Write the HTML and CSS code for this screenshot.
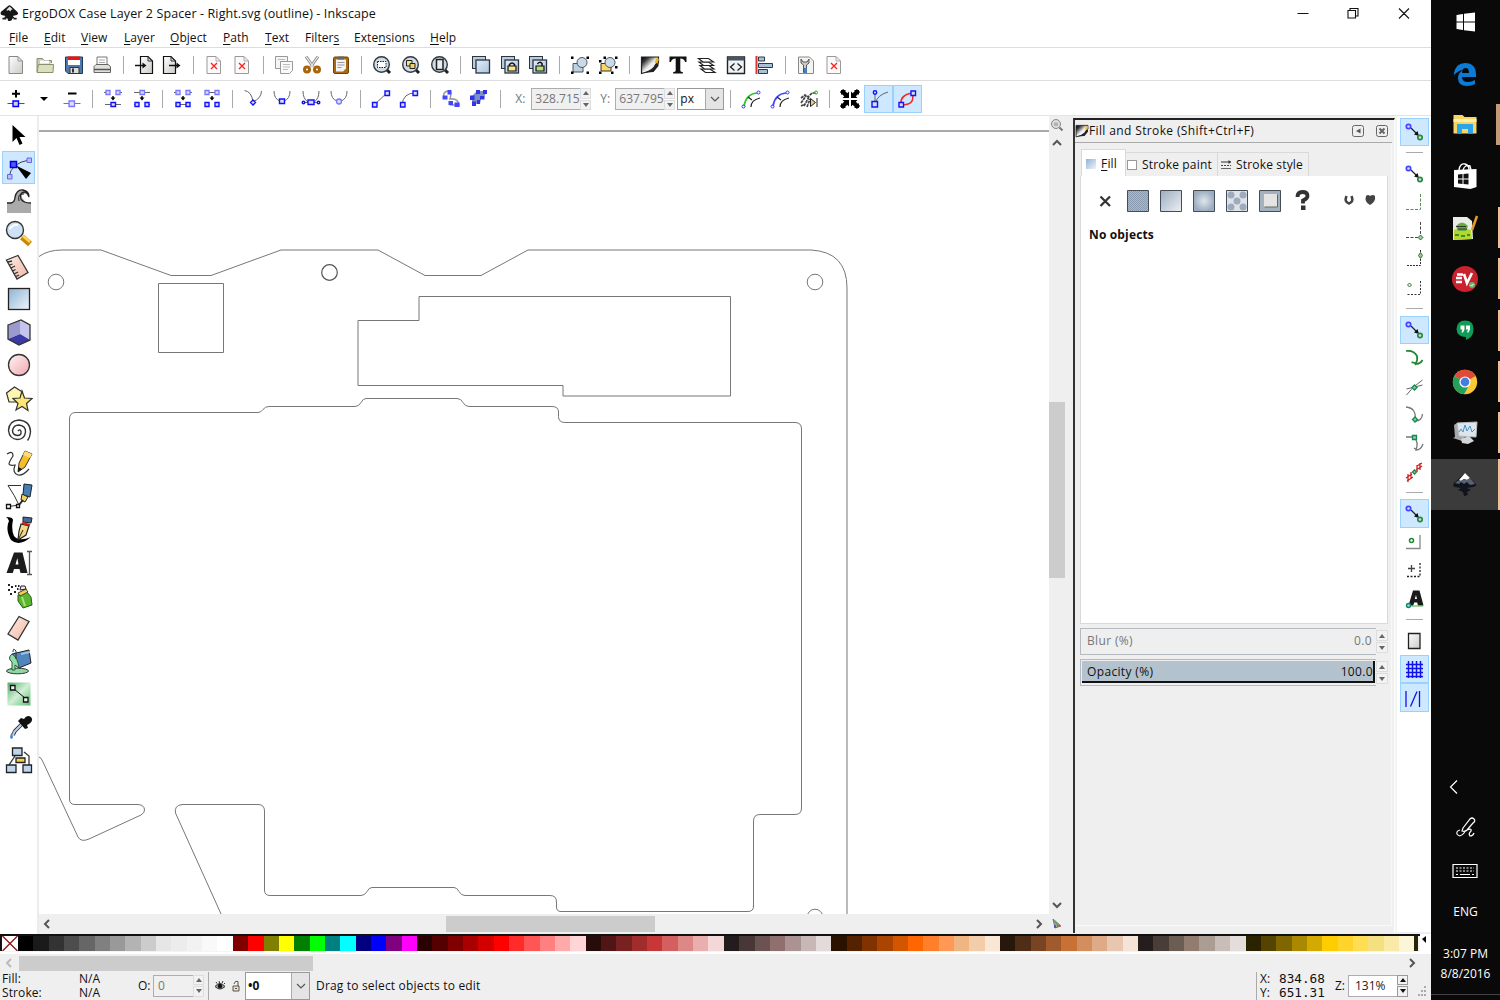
FILE: index.html
```html
<!DOCTYPE html>
<html lang="en">
<head>
<meta charset="utf-8">
<title>ErgoDOX Case Layer 2 Spacer - Right.svg (outline) - Inkscape</title>
<link rel="stylesheet" href="styles.css">
</head>
<body>
<svg class="defs" width="0" height="0">
  <defs>
    <linearGradient id="blueG" x1="0" y1="0" x2="1" y2="1"><stop offset="0" stop-color="#8fb2d4"/><stop offset="1" stop-color="#eef5fb"/></linearGradient>
    <linearGradient id="dupG" x1="0" y1="0" x2="1" y2="1"><stop offset="0" stop-color="#e4edf6"/><stop offset="1" stop-color="#a9c4de"/></linearGradient>
    <linearGradient id="slateG" x1="0" y1="0" x2="1" y2="1"><stop offset="0" stop-color="#9badc0"/><stop offset="1" stop-color="#eef0f3"/></linearGradient>
    <radialGradient id="slateR"><stop offset="0" stop-color="#dfe6ec"/><stop offset="1" stop-color="#9badc0"/></radialGradient>
    <linearGradient id="pinkG" x1="0" y1="0" x2="1" y2="1"><stop offset="0" stop-color="#fff3f3"/><stop offset="1" stop-color="#f0a8b0"/></linearGradient>
    <linearGradient id="salmonG" x1="0" y1="0" x2="1" y2="1"><stop offset="0" stop-color="#fdeee8"/><stop offset="1" stop-color="#f3b6a2"/></linearGradient>
    <linearGradient id="greyG" x1="0" y1="0" x2="1" y2="1"><stop offset="0" stop-color="#fff"/><stop offset="1" stop-color="#c9ccc6"/></linearGradient>
    <linearGradient id="darkG" x1="0" y1="0" x2="1" y2="1"><stop offset="0" stop-color="#000"/><stop offset=".2" stop-color="#333"/><stop offset=".5" stop-color="#eee"/><stop offset="1" stop-color="#fff"/></linearGradient>
    <linearGradient id="greenG" x1="0" y1="0" x2="1" y2="1"><stop offset="0" stop-color="#4fae66"/><stop offset=".5" stop-color="#d2efd6"/><stop offset="1" stop-color="#58c070"/></linearGradient>
    <pattern id="hatch" width="2" height="2" patternUnits="userSpaceOnUse"><rect width="2" height="2" fill="#a9b8ca"/><path d="M0 0h1v1H0zM1 1h1v1H1z" fill="#8b9bb0"/></pattern>
    <symbol id="page" viewBox="0 0 24 24"><path d="M5 3.500h9l4.500 4.500v12.500H5z" fill="url(#greyG)" stroke="#888"/><path d="M14 3.500V8h4.500" fill="none" stroke="#999"/></symbol>
    <symbol id="badpage" viewBox="0 0 24 24"><path d="M5 3.500h9l4.500 4.500v12.500H5z" fill="#fafafa" stroke="#999"/><path d="M14 3.500V8h4.500" fill="none" stroke="#aaa"/><path d="M9 10l6 6M15 10l-6 6" stroke="#f22" stroke-width="1.400"/></symbol>
    <symbol id="lens" viewBox="0 0 24 24"><path d="M17 17l3 3" stroke="#222" stroke-width="3"/><circle cx="11.500" cy="11.500" r="7.800" fill="#cfdde8" stroke="#33383c" stroke-width="1.400"/></symbol>
    <symbol id="dup" viewBox="0 0 24 24"><rect x="3.500" y="3.500" width="13" height="12" fill="#b8cede" stroke="#2b3440"/><rect x="7" y="7" width="13.500" height="13" fill="url(#dupG)" stroke="#2b3440" stroke-width="1.300"/></symbol>
    <symbol id="snap" viewBox="0 0 24 24"><path d="M8 8l6 6" stroke="#222" stroke-width="1.300"/><path d="M16 16l-5-1.500 3.500-3.500z" fill="#111"/><circle cx="5.500" cy="6.500" r="2.200" fill="#cde" stroke="#44f" stroke-width="1.700"/><circle cx="17" cy="17.500" r="2.200" fill="#cde" stroke="#2a8a3a" stroke-width="1.700"/></symbol>
    <symbol id="fillstroke" viewBox="0 0 24 24"><path d="M3.500 4H20.500v5l-4.500 8-12.500 3.500z" fill="url(#darkG)" stroke="#222" stroke-width="1.200"/><path d="M20.500 8q-3 2-5 6-4 4-11 6l11-1 5-6z" fill="#222"/><path d="M18.500 5l2.500 1-1.500 4.500-3-1z" fill="#f0b41a"/></symbol>
    <symbol id="ink" viewBox="0 0 24 24"><path d="M12 1.500q1.500 0 3 2l7 6.500q2 2.500-1 4l-5 1q2 1 2 2.500l-3 1.500q1 2-3 2.500-3 0-2-3l-5-1.500 2-2-5-1q-2-1-1-4l8-6.500Q10.500 1.500 12 1.500z" fill="#161616"/><path d="M12 3l4 3.500-2 1-1 2-2-2-2 1-1-1z" fill="#dfe3e8"/><path d="M3 18.500h5M17 18.500h4" stroke="#222" stroke-width="2"/></symbol>
  </defs>
</svg>

<div class="desktop">
<div class="app">
  <header class="titlebar">
    <svg class="logo" viewBox="0 0 24 24"><use href="#ink"/></svg>
    <span class="title">ErgoDOX Case Layer 2 Spacer - Right.svg (outline) - Inkscape</span>
    <svg class="winctl" viewBox="0 0 120 24" fill="none" stroke="#111" stroke-width="1.100"><path d="M3.500 12.500h11M54 9.500h7.500v7.500H54zM56 9.500v-2h8v7.500h-2M105 7.500l10 10M115 7.500l-10 10"/></svg>
  </header>
  <nav class="menubar">
    <span class="m1"><u>F</u>ile</span><span class="m2"><u>E</u>dit</span><span class="m3"><u>V</u>iew</span><span class="m4"><u>L</u>ayer</span><span class="m5"><u>O</u>bject</span><span class="m6"><u>P</u>ath</span><span class="m7"><u>T</u>ext</span><span class="m8">Filter<u>s</u></span><span class="m9">Exte<u>n</u>sions</span><span class="m10"><u>H</u>elp</span>
  </nav>

  <div class="toolbar commands">
    <b><svg viewBox="0 0 24 24"><use href="#page"/></svg></b>
    <b><svg viewBox="0 0 24 24"><path d="M4 19V5.500h5.500l1.500 2h7.500V10" fill="#c9cdb0" stroke="#8b8f70"/><path d="M4 19.500l1.500-8h15l-.500 8z" fill="#dadfbd" stroke="#8b8f70"/><path d="M7 7.500h9v3H7z" fill="#fff"/></svg></b>
    <b><svg viewBox="0 0 24 24"><path d="M3.500 4h17v16.500H6L3.500 18z" fill="#4f79ad" stroke="#1f3657"/><path d="M6 4h12v8H6z" fill="#fff"/><path d="M6 3.500h12v3.500H6z" fill="#e11"/><path d="M8 14.500h9v6H8z" fill="#ddd" stroke="#333"/><path d="M10 15.500h2v4h-2z" fill="#333"/></svg></b>
    <b><svg viewBox="0 0 24 24"><path d="M7 12V4h10v8" fill="#fff" stroke="#777"/><path d="M9 7h6M9 9.500h6" stroke="#aaa"/><path d="M4 19.500v-6l2-2h12l2.500 2v6z" fill="#e0e0dc" stroke="#666"/><path d="M4 16.500h16.500" stroke="#555" stroke-width="1.500"/></svg></b>
    <i></i>
    <b><svg viewBox="0 0 24 24"><path d="M8.500 3.500H16l4.500 4.500v12.500h-12z" fill="url(#greyG)" stroke="#111" stroke-width="1.200"/><path d="M16 3.500V8h4.500" fill="none" stroke="#333"/><path d="M3 12.500h8" stroke="#111" stroke-width="1.500"/><path d="M10.500 9.500l4 3-4 3z" fill="#111"/></svg></b>
    <b><svg viewBox="0 0 24 24"><path d="M3.500 3.500H11l4.500 4.500v12.500h-12z" fill="url(#greyG)" stroke="#111" stroke-width="1.200"/><path d="M11 3.500V8h4.500" fill="none" stroke="#333"/><path d="M9 12.500h8" stroke="#111" stroke-width="1.500"/><path d="M16.500 9.500l4 3-4 3z" fill="#111"/></svg></b>
    <i></i>
    <b><svg viewBox="0 0 24 24"><use href="#badpage"/></svg></b>
    <b><svg viewBox="0 0 24 24"><use href="#badpage"/></svg></b>
    <i></i>
    <b><svg viewBox="0 0 24 24" stroke="#999"><path d="M3.500 3.500h12v12h-12z" fill="#f4f4f4"/><path d="M8.500 8.500h12v9l-3 3h-9z" fill="#fafafa"/><path d="M6 6.500h7M11 11.500h7M11 14h7M11 16.500h5" stroke="#bbb"/></svg></b>
    <b><svg viewBox="0 0 24 24"><path d="M6 3.500l7 10M18 3.500l-7 10" stroke="#8a8a8a" stroke-width="3"/><path d="M6 3.500l7 10M18 3.500l-7 10" stroke="#eee" stroke-width="1.200"/><g fill="none" stroke="#a9640a" stroke-width="3"><circle cx="7" cy="16.500" r="2.500"/><circle cx="17" cy="16.500" r="2.500"/></g></svg></b>
    <b><svg viewBox="0 0 24 24"><rect x="4.500" y="4" width="15" height="16.500" rx="1.500" fill="#a9690f" stroke="#6d430a"/><path d="M7 6.500h10v9l-3 3H7z" fill="#f3f3f3"/><path d="M8.500 9.500h7M8.500 12h7M8.500 14.500h4" stroke="#999"/><path d="M9 3.500h6v3H9z" fill="#666"/></svg></b>
    <i></i>
    <b><svg viewBox="0 0 24 24"><use href="#lens"/><path d="M7.500 8.500h8.500v6H7.500z" fill="#fff" stroke="#222" stroke-dasharray="1.500 1"/></svg></b>
    <b><svg viewBox="0 0 24 24"><use href="#lens"/><path d="M7.500 7.500h5.500v5.500H7.500z" fill="#f8e28a" stroke="#222"/><path d="M11 10.500h5v5h-5z" fill="#f4cf62" stroke="#222"/></svg></b>
    <b><svg viewBox="0 0 24 24"><use href="#lens"/><path d="M8.500 6.500h6.500V16.500H8.500z" fill="#eee" stroke="#222" stroke-width="1.500"/></svg></b>
    <i></i>
    <b><svg viewBox="0 0 24 24"><use href="#dup"/></svg></b>
    <b><svg viewBox="0 0 24 24"><use href="#dup"/><path d="M11.500 13v-1.500q2.500-3 5 0V13" fill="none" stroke="#111" stroke-width="1.500"/><path d="M10 13h8v5h-8z" fill="#fbe38a" stroke="#111" stroke-width="1.200"/></svg></b>
    <b><svg viewBox="0 0 24 24"><use href="#dup"/><path d="M11.500 11q2-3 4.500-.500V13" fill="none" stroke="#111" stroke-width="1.500"/><path d="M10 13h8v5h-8z" fill="#b6e07a" stroke="#111" stroke-width="1.200"/></svg></b>
    <i></i>
    <b><svg viewBox="0 0 24 24"><path d="M5 10.500h10V19H5z" fill="#bcd0e4" stroke="#555"/><circle cx="14" cy="9.500" r="5" fill="#c9daea" stroke="#555"/><path d="M3 3.500h2.500V6H3zM18.500 3.500H21V6h-2.500zM3 18.500h2.500V21H3zM18.500 18.500H21V21h-2.500z"/></svg></b>
    <b><svg viewBox="0 0 24 24"><path d="M5 10.500h10V18H5z" fill="#fbd765" stroke="#333"/><circle cx="14" cy="9.500" r="5" fill="#c9daea" stroke="#555"/><path d="M3 7h2.500v2.500H3zM7.500 3.500H10V6H7.500zM19 3.500h2.500V6H19zM3 18.500h2.500V21H3zM15 18.500h2.500V21H15zM19 13h2.500v2.500H19z"/></svg></b>
    <i></i>
    <b><svg viewBox="0 0 24 24"><use href="#fillstroke"/></svg></b>
    <b><svg viewBox="0 0 24 24"><path d="M3.500 3.500h17v5.500h-1.500q-.500-3.500-4.700-3.500v12q0 1.500 2.500 1.500v1.500H7.200V19q2.500 0 2.500-1.500v-12Q5.500 5.500 5 9H3.500z" fill="#111"/></svg></b>
    <b><svg viewBox="0 0 24 24" fill="#fff" stroke="#222" stroke-width="1.200"><path d="M6 16h9l5 3.500H10.500z"/><path d="M5 12.500h9l5 3.500H9.500z"/><path d="M4 9h9.500l5 3.500H8.500z"/><path d="M3.500 5.500h10l5 3.500H8z"/></svg></b>
    <b><svg viewBox="0 0 24 24"><path d="M3.500 4h17v16.500h-17z" fill="#eef2f4" stroke="#222" stroke-width="1.400"/><path d="M3.500 4h17v3.500h-17z" fill="#435567"/><path d="M10.500 10.500l-4 3.500 4 3.500M13.500 10.500l4 3.500-4 3.500" fill="none" stroke="#222" stroke-width="1.300"/></svg></b>
    <b><svg viewBox="0 0 24 24" fill="#a9c1d6" stroke="#2c3a4a"><path d="M4.500 3v18" stroke="#d33" stroke-width="2"/><path d="M6.500 4h6v4h-6zM6.500 10.500h14v4h-14zM6.500 16.500h9v4h-9z"/></svg></b>
    <i></i>
    <b><svg viewBox="0 0 24 24"><path d="M4.500 4h11l4 4v12.500h-15z" fill="#f4f4f0" stroke="#888"/><path d="M7 6v4l2.500 2v7.500h3V12L15 10V6l-2 3h-4z" fill="#ccc" stroke="#555"/><path d="M10 15h3v5h-3z" fill="#4a7db5"/></svg></b>
    <b><svg viewBox="0 0 24 24"><use href="#badpage"/></svg></b>
  </div>

  <div class="toolbar nodes">
    <b><svg viewBox="0 0 24 24"><path d="M12 3v7.500M8 6.700h8" stroke="#000" stroke-width="2"/><path d="M3.500 16.500h17" stroke="#555"/><path d="M9 14h5.500v5.500H9z" fill="#cce" stroke="#00f" stroke-width="1.400"/></svg></b>
    <b class="drop"><svg viewBox="0 0 24 24"><path d="M8 10h8l-4 4z"/></svg></b>
    <b><svg viewBox="0 0 24 24"><path d="M8 6.500h8.500" stroke="#000" stroke-width="2"/><path d="M3.500 16.500h17" stroke="#777"/><path d="M9 14h5.500v5.500H9z" fill="#dde" stroke="#77f" stroke-width="1.300"/></svg></b>
    <i></i>
    <b><svg class="nd" viewBox="0 0 24 24"><path class="k" d="M3 5.500h4M17 5.500h4M4 17.500h16"/><path class="f" d="M5 3.500h4v4H5zM15 3.500h4v4h-4z"/><path class="n" d="M10 15.500h4.500v4H10z"/><path class="a" d="M12 9v2"/><path d="M9.500 10.500h5l-2.500 3z"/></svg></b>
    <b><svg class="nd" viewBox="0 0 24 24"><path class="k" d="M4 5.500h16M4 17.500h2M18 17.500h2"/><path class="f" d="M10 3.500h4.500v4H10z"/><path class="n" d="M5 15.500h4v4H5zM15 15.500h4v4h-4z"/><path class="a" d="M12 9v2"/><path d="M9.500 10.500h5l-2.500 3z"/></svg></b>
    <i></i>
    <b><svg class="nd" viewBox="0 0 24 24"><path class="k" d="M3 5.500h4M17 5.500h4M5 17.500h14"/><path class="f" d="M5 3.500h4v4H5zM15 3.500h4v4h-4z"/><path class="n" d="M5 15.500h4v4H5zM15 15.500h4v4h-4z"/><path class="a" d="M12 9v2"/><path d="M9.500 10.500h5l-2.500 3z"/></svg></b>
    <b><svg class="nd" viewBox="0 0 24 24"><path class="k" d="M5 5.500h14"/><path class="f" d="M5 3.500h4v4H5zM15 3.500h4v4h-4z"/><path class="n" d="M5 15.500h4v4H5zM15 15.500h4v4h-4z"/><path class="a" d="M12 9v2"/><path d="M9.500 10.500h5l-2.500 3z"/></svg></b>
    <i></i>
    <b><svg class="nd" viewBox="0 0 24 24"><path class="k" d="M3.500 3.500q7 1 8.500 11Q20 12 20.500 4"/><path class="n" d="M12 13l2.500 2.500L12 18l-2.500-2.500z"/></svg></b>
    <b><svg class="nd" viewBox="0 0 24 24"><path class="k" d="M4 4q0 8 6 10h4q6-2 6-10"/><path class="n" d="M9.500 12h5v4.500h-5z"/></svg></b>
    <b><svg class="nd" viewBox="0 0 24 24"><path class="k" d="M4 4q0 8 5 11h6q5-3 5-11M4 15.500h16"/><path class="n" d="M9 13h6v4.500H9z"/><circle class="n" cx="4.500" cy="15.500" r="1.300"/><circle class="n" cx="19.500" cy="15.500" r="1.300"/></svg></b>
    <b><svg class="nd" viewBox="0 0 24 24"><path class="k" d="M4 4q0 8 6 10h4q6-2 6-10"/><circle class="f" cx="12" cy="14.500" r="2.500"/></svg></b>
    <i></i>
    <b><svg class="nd" viewBox="0 0 24 24"><path class="k" d="M5 18L19 5"/><path class="n" d="M3.500 15.500H8v4.500H3.500zM16 4h4.500v4.500H16z"/></svg></b>
    <b><svg class="nd" viewBox="0 0 24 24"><path class="k" d="M5 18Q6 6 18 6"/><path class="n" d="M3.500 15.500H8v4.500H3.500zM16 4h4.500v4.500H16z"/></svg></b>
    <i></i>
    <b><svg class="nd" viewBox="0 0 24 24"><path d="M5 12q-2-8 5-8 3 1 1 8 8-1 9 6h-9" fill="none" stroke="#999" stroke-width="1.500"/><path d="M8.500 3h4v4.500h-4zM3.500 8.500h5v4h-5zM9.500 14h4.500v4H9.500zM15.500 15.500h5v4.500h-5z" fill="#44f"/></svg></b>
    <b><svg viewBox="0 0 24 24"><path d="M5 9l5-5h10l-3 6-3 2-1 5H5z" fill="#7c8fc4"/><path d="M9 3h4v4H9zM16 3h4v4h-4zM3 8.500h4.500V13H3zM13 9h4.500v3.500H13zM5 14.500h4V19H5zM10 13h3v4h-3z" fill="#33e"/></svg></b>
    <i></i>
    <label class="lx">X:</label><span class="num">328.715</span><span class="spin"><em></em><em class="dn"></em></span>
    <label class="ly">Y:</label><span class="num">637.795</span><span class="spin"><em></em><em class="dn"></em></span>
    <span class="combo"><span>px</span><s><svg viewBox="0 0 12 12"><path d="M2 4l4 4 4-4"/></svg></s></span>
    <i></i>
    <b><svg viewBox="0 0 24 24" fill="none"><path d="M5 19Q7 7 18 6" stroke="#2c2" stroke-width="1.700"/><path d="M12 20q0-7 9-9M13 13l-4-3" stroke="#222" stroke-width="1.200"/><circle cx="19.500" cy="5.500" r="1.500" stroke="#33f"/><circle cx="4.500" cy="19.500" r="1.500" stroke="#33f"/></svg></b>
    <b><svg viewBox="0 0 24 24" fill="none"><path d="M5 19Q7 7 18 6" stroke="#44f" stroke-width="1.700"/><path d="M12 20q0-7 9-9M13 13l-4-3" stroke="#222" stroke-width="1.200"/><circle cx="19.500" cy="5.500" r="1.500" stroke="#33f"/><circle cx="4.500" cy="19.500" r="1.500" stroke="#33f"/></svg></b>
    <b><svg viewBox="0 0 24 24" fill="none"><path d="M4 16l5-7M7 19l5-9M10 20l3-8M4 11l4-3 3 2 4-4 4 0M4 19l4-2" stroke="#444" stroke-width="1.700" stroke-dasharray="3 .7"/><path d="M13.500 11.500l5 4-5 4z" fill="#edca85" stroke="#222"/><path d="M20 11v9" stroke="#222"/><circle cx="19" cy="5.500" r="1.500" stroke="#2a2"/></svg></b>
    <i></i>
    <b><svg viewBox="0 0 24 24"><path d="M3.500 3.500l5 5M20.500 3.500l-5 5M3.500 20.500l5-5M20.500 20.500l-5-5" stroke="#000" stroke-width="4.500"/><path d="M3 3h5L3 8zM21 3h-5l5 5zM3 21h5l-5-5zM21 21h-5l5-5zM11 4.500V11H4.500zM13 4.500V11h6.500zM11 19.500V13H4.500zM13 19.500V13h6.500z"/></svg></b>
    <b class="on"><svg class="nd" viewBox="0 0 24 24"><path class="k" d="M8 17V6M8 17Q10 8 21 5"/><circle class="n" cx="8" cy="5.500" r="1.700"/><path class="n" d="M5 14.500h5.500V20H5z"/></svg></b>
    <b class="on"><svg class="nd" viewBox="0 0 24 24"><path d="M6 17Q5 8 17 6q4 12-11 12" fill="none" stroke="#f22" stroke-width="1.500"/><path class="n" d="M4 15.500h4.500V20H4zM16 4h4.500v4.500H16z"/></svg></b>
  </div>

  <main class="work">
    <aside class="toolbox">
      <b><svg viewBox="0 0 28 28"><path d="M7.500 4v17l4-4 3 7 3-1.500-3-6.500h6z" fill="#000"/></svg></b>
      <b class="on"><svg viewBox="0 0 28 28"><path d="M4 23Q6 9 24 6" fill="none" stroke="#444"/><path d="M2.500 20.500H7V25H2.500zM22 4h4.500v4.500H22z" fill="#bbf" stroke="#66e"/><path d="M5.500 7.500h6v6h-6z" fill="#55f" stroke="#00d" stroke-width="1.500"/><path d="M11 11.500l15 7.500-5 6z" fill="#000"/></svg></b>
      <b><svg viewBox="0 0 28 28"><path d="M2 16q8 1 8-5 1-9 9-8 5 2 4 6-2-3-5-2-3 2 0 5l3 4h5v10H2z" fill="#aaa"/><path d="M2 16h4q4-1 4-6 2-8 8-7 6 1 6 7-1-4-4-5-6 0-4 7 2 4 10 4" fill="none" stroke="#222" stroke-width="1.300"/><path d="M14 14q-2-8 5-7" stroke="#222" fill="none"/></svg></b>
      <b><svg viewBox="0 0 28 28"><path d="M17 17l8 7" stroke="#c8860d" stroke-width="6"/><path d="M18 16l7 6" stroke="#ffd548" stroke-width="2.500"/><circle cx="10" cy="10" r="8.500" fill="#cfe2f5" stroke="#333" stroke-width="1.400"/><path d="M5 9q3-5 8-4" stroke="#fff" stroke-width="2" fill="none"/></svg></b>
      <b><svg viewBox="0 0 28 28"><path d="M1.500 7L13 2.500l10 17L12 26z" fill="url(#salmonG)" stroke="#333" stroke-width="1.300"/><path d="M3 9l4-1M4.500 12l3-1M6 15l4-2M7.500 18l3-1.500M9 21l4-2M11 23.500l3-1.500" stroke="#333" stroke-width="1.300"/></svg></b>
      <b><svg viewBox="0 0 28 28"><rect x="3.500" y="3.500" width="21" height="21" fill="url(#blueG)" stroke="#222" stroke-width="1.300"/></svg></b>
      <b><svg viewBox="0 0 28 28"><path d="M3 7l13-5 9 5v15l-11 5-11-6z" fill="#c4c4ec"/><path d="M3 21l12-5 10 6-11 5z" fill="#3a3aa5"/><path d="M3 7l12-5v14L3 21z" fill="#9a9acf"/><path d="M3 7l13-5 9 5v15l-11 5-11-6z" fill="none" stroke="#333" stroke-width="1.300"/></svg></b>
      <b><svg viewBox="0 0 28 28"><circle cx="14" cy="14" r="10.500" fill="url(#pinkG)" stroke="#333" stroke-width="1.300"/></svg></b>
      <b><svg viewBox="0 0 28 28" stroke="#333" stroke-width="1.200"><path d="M1.500 9l8-6 8 5-2 10H4z" fill="#fcf6b0"/><path d="M17 7l2.500 7 7.500.500-5.500 5 1.500 7-6-4-6 3.500 2-6.500-5-5 7-.500z" fill="#fde576"/></svg></b>
      <b><svg viewBox="0 0 28 28" fill="none" stroke="#333" stroke-width="1.400"><path d="M13 14q2-2.500 3 .5.500 4-3.500 4-5-.500-5-5Q8.500 8 14 8q7 1 6.500 7-1 7.500-8 7.500-8-.500-9-9Q4 3.500 14 3q11 1 11.500 11.500-.500 6-3 9"/></svg></b>
      <b><svg viewBox="0 0 28 28"><path d="M2 4q6-4 6 2-4 6-4 8 1 2 6 1-3 8 3 10 5 1 11-6" fill="none" stroke="#333" stroke-width="1.200"/><path d="M13 22l1-9 6-12 7 3-7 13z" fill="#f5bd28" stroke="#333"/><path d="M20 1l7 3-2 4-7-3z" fill="#ffdd73"/><path d="M13 22l.500-5 3.500 2z" fill="#111"/></svg></b>
      <b><svg viewBox="0 0 28 28"><path d="M4 23.500L14 22Q10 13 3 2.500h13" fill="none" stroke="#333"/><path d="M1.500 21.500h4v4h-4zM11.500 21.500h3v3h-3z" fill="#fff" stroke="#111" stroke-width="1.300"/><path d="M19 1l8 1-2 12-7-2z" fill="#477fb4" stroke="#222"/><path d="M17 11l6 3-3 5-4-2z" fill="#f1d35e" stroke="#222"/><path d="M18 17l-4 5" stroke="#222" stroke-width="2"/></svg></b>
      <b><svg viewBox="0 0 28 28"><path d="M1 1q7 0 7 3-2 9 1 16 5 6 17 1-12 10-20 3Q0 13 4 5 3 2 1 1z" fill="#000"/><path d="M18 1l9 1-1 5-8-1z" fill="#466b98" stroke="#222"/><path d="M16 8l8 2-3 9-8 5 1-9z" fill="#f5d984" stroke="#222" stroke-width="1.200"/><path d="M17 7l8 2" stroke="#c22" stroke-width="2"/><path d="M13.500 23l4.500-9" stroke="#222"/></svg></b>
      <b><svg viewBox="0 0 28 28"><path d="M1.500 24L9 3.500h8.500L22.500 24h-7l-1-4H9l-1.200 4zM10.500 15.500h3L12.300 9z" fill="#1c1c1c"/><path d="M22 2.500h5M24.500 3v22M22 25.500h5" stroke="#555" stroke-width="1.300"/></svg></b>
      <b><svg viewBox="0 0 28 28"><path d="M3 4h2M6 6h2M3 9h2M10 5h1.500M12 8h1.500M5 13h2M9 11h2M13 5h1.500" stroke="#222" stroke-width="2"/><path d="M13 14l9-3 4 5 1 8-9 3-5-7z" fill="#5bb531" stroke="#286314"/><path d="M13 12l8-4 2 3-8 4z" fill="#f5ce4c" stroke="#444"/><path d="M15 9l1-4 4 0 1 3z" fill="#eee" stroke="#222"/><path d="M17 16l3 9" stroke="#a9e279" stroke-width="2"/></svg></b>
      <b><svg viewBox="0 0 28 28"><path d="M14 2.500l10 5L13 26 3 20z" fill="url(#salmonG)" stroke="#333" stroke-width="1.300"/></svg></b>
      <b><svg viewBox="0 0 28 28"><ellipse cx="12.500" cy="24" rx="11" ry="2.800" fill="#8fd7a4" stroke="#333"/><path d="M7 7l17-4 2 13-12 5q-6-3-7-14z" fill="#4f86bd" stroke="#222"/><path d="M7 7q6 4 7 14l-4-3v5H7V15q-5-4 0-8z" fill="#90dba6" stroke="#2a5b38"/><path d="M11 12V4q-3-4-3 1" fill="none" stroke="#333"/><path d="M16 7l9-2" stroke="#9fc3e2" stroke-width="2"/></svg></b>
      <b><svg viewBox="0 0 28 28"><rect x="2.500" y="2.500" width="23" height="23" fill="url(#greenG)"/><path d="M9 9l11 9" stroke="#111"/><path d="M5.500 5.500H10V10H5.500zM18.500 17.500H23V22h-4.500z" fill="#eee" stroke="#111" stroke-width="1.300"/></svg></b>
      <b><svg viewBox="0 0 28 28"><path d="M19 9L10 18l-2 4" fill="none" stroke="#333" stroke-width="3.800"/><path d="M19 9L9.500 18.500 8 22" stroke="#b9d2ec" stroke-width="2" fill="none"/><path d="M16 5l3 1q3-5 7-2 3 4-2 7l-2 1 1 3-3 1-7-8z" fill="#111"/><path d="M6.500 20q-3 5 0 6 3-1 0-6z" fill="#4e87cc"/></svg></b>
      <b><svg viewBox="0 0 28 28"><path d="M10 10L4 19M19 6l5 4v9" stroke="#333" fill="none" stroke-width="1.300"/><g stroke="#222" fill="#bdd5ed" stroke-width="1.300"><path d="M7.500 2H17v7.500H7.500zM1.500 19h9.500v7.500H1.500zM18 19h8.500v7.500H18z"/><path d="M11 12h9v4.500h-9z" fill="#f8ce46"/></g></svg></b>
    </aside>

    <section class="view">
      <div class="viewtop">
        <svg class="canvas" viewBox="39 116 1010 798" fill="none" stroke="#777" stroke-width="1">
          <path d="M39 131H1049" stroke="#555" stroke-width="1.200"/>
          <path d="M39 256.500Q48 250 62 250H101L171 275.500H211L281 250H378L425 275.500H481L528 250H811Q847 252 847 288V915"/>
          <circle cx="56" cy="282" r="7.800"/><circle cx="329.500" cy="272.500" r="7.800" stroke="#555" stroke-width="1.200"/><circle cx="815" cy="282" r="7.800"/><circle cx="815" cy="917" r="7.800"/>
          <path d="M158.500 283.500H223.500V352.500H158.500z"/>
          <path d="M419 296.500H730.500V396H563V385.500H358V320.500H419z"/>
          <path d="M75 412.500H258Q261 412.500 263 409.500T269 406.500H355Q359 406.500 361 402.500T366 398.500H457Q461 398.500 463 402.500T469 406.500H552Q558.500 406.500 558.500 412V416.500Q558.500 422.500 565 422.500H795Q801.500 422.500 801.500 429V808Q801.500 814.500 795 814.500H760Q753.500 814.500 753.500 821V906Q753.500 911.500 748 911.500H561Q556.500 911.500 556.500 907V902Q556.500 895.500 550 895.500H465Q461 895.500 459 891.500T454 887.500H372Q369 887.500 367 891.500T361 895.500H270Q264.500 895.500 264.500 890V811Q264.500 804.500 258 804.500H182Q174 805.500 175.500 813L221.500 915"/>
          <path d="M75 412.500Q69.500 413 69.500 419V799Q69.500 804.500 75 804.500H138Q144.500 805 144.500 810Q144.500 813 141 815L89 839Q81 842.500 78 837L43 762Q41 757 39 757"/>
        </svg>
        <div class="vbar">
          <svg class="sb" viewBox="0 0 16 16"><circle cx="7" cy="7" r="4.500" fill="#ddd" stroke="#888"/><path d="M10.500 10.500l3 3" stroke="#777" stroke-width="2"/><path d="M6 5.500v3.500M8 5.500v3.500" stroke="#888" fill="none"/></svg>
          <svg class="sb up" viewBox="0 0 16 16"><path d="M4 10l4-4 4 4"/></svg>
          <div class="vthumb"></div>
          <svg class="sb dnarr" viewBox="0 0 16 16"><path d="M4 6l4 4 4-4"/></svg>
        </div>
      </div>
      <div class="hbar">
        <svg class="sb" viewBox="0 0 16 16"><path d="M10 4l-4 4 4 4"/></svg>
        <div class="hthumb"></div>
        <svg class="sb right" viewBox="0 0 16 16"><path d="M6 4l4 4-4 4"/></svg>
        <svg class="sb cms" viewBox="0 0 16 16"><path d="M4 3l8 7-6 2z" fill="#9a9" stroke="#777" stroke-width="1"/><path d="M4 4l4 3v2z" fill="#3b3" stroke="none"/><path d="M8 8l4 2-4 1z" fill="#c55" stroke="none"/><path d="M5 9h2v3H5z" fill="#55c" stroke="none"/></svg>
      </div>
    </section>

    <section class="dock">
      <div class="dockhead">
        <svg class="dicon" viewBox="2 2 20 20"><use href="#fillstroke" width="24" height="24"/></svg>
        <span class="dtitle">Fill and Stroke (Shift+Ctrl+F)</span>
        <svg class="dbtn" viewBox="0 0 40 14" fill="none" stroke="#666"><rect x="1.500" y="1.500" width="11" height="11" rx="2"/><path d="M9.500 4.500v5L5 7z" fill="#555" stroke="none"/><rect x="25.500" y="1.500" width="11" height="11" rx="2"/><path d="M28.500 4.500l5 5M33.500 4.500l-5 5" stroke-width="2"/></svg>
      </div>
      <div class="dockbody">
      <div class="tabs">
        <div class="tab cur"><svg viewBox="0 0 12 12"><rect x="1" y="1" width="10" height="10" fill="url(#blueG)"/></svg><span><u>F</u>ill</span></div>
        <div class="tab t2"><svg viewBox="0 0 12 12"><rect x="1.500" y="1.500" width="9" height="9" fill="#fff" stroke="#999"/></svg><span>Stroke paint</span></div>
        <div class="tab t3"><svg viewBox="0 0 12 12"><path d="M1 3h10" stroke="#333"/><path d="M1 6.500h10" stroke="#444" stroke-dasharray="2 1"/><path d="M1 9.500h10" stroke="#666"/><path d="M8.500 1l2.500 2-2.500 2z" fill="#333"/></svg><span>Stroke style</span></div>
      </div>
      <div class="panel">
        <svg class="paints" viewBox="1081 186 307 28">
          <path d="M1100.500 196.500l9.500 9.500M1110 196.500l-9.500 9.500" stroke="#333" stroke-width="2.200"/>
          <g stroke="#454c56"><path d="M1127.500 190.500h21v21h-21z" fill="url(#hatch)"/><path d="M1160.500 190.500h21v21h-21z" fill="url(#slateG)"/><path d="M1193.500 190.500h21v21h-21z" fill="url(#slateR)"/><path d="M1226.500 190.500h21v21h-21z" fill="#dfe3e8"/><path d="M1259.500 190.500h21v21h-21z" fill="#a4b1bf"/></g>
          <g fill="#9dacbd"><circle cx="1231" cy="195" r="3.500"/><circle cx="1243" cy="195" r="3.500"/><circle cx="1237" cy="201" r="3.500"/><circle cx="1231" cy="207" r="3.500"/><circle cx="1243" cy="207" r="3.500"/></g>
          <path d="M1264 194h13v13h-13z" fill="#e6e3e3"/><path d="M1264.500 207h13v-12.500" fill="none" stroke="#666"/>
          <path d="M1297.500 197q0-5 5-5t5 4q0 2.500-4.500 4.500v3" fill="none" stroke="#333" stroke-width="3.800"/><path d="M1301 205.500h4.500v4.500h-4.500z" fill="#333"/>
          <path d="M1346.500 196q-2.500 6 2.500 7.500 5-1.500 2.500-7.500" fill="none" stroke="#444" stroke-width="2.600"/>
          <path d="M1366 196q2-2 4 0 3-2 5 0 1 6-5 9-6-3-4-9z" fill="#444"/>
        </svg>
        <strong>No objects</strong>
      </div>
      <div class="slider blur"><div class="track"><span>Blur (%)</span><span>0.0</span></div><span class="spin"><em></em><em class="dn"></em></span></div>
      <div class="slider opac"><div class="track"><div class="bar"><span>Opacity (%)</span><span>100.0</span></div></div><span class="spin"><em></em><em class="dn"></em></span></div>
      </div>
    </section>

    <aside class="snapbar">
      <b class="on"><svg viewBox="0 0 24 24"><use href="#snap"/></svg></b>
      <i></i>
      <b><svg viewBox="0 0 24 24"><use href="#snap"/></svg></b>
      <b><svg viewBox="0 0 24 24"><path d="M17.500 3v15.500H3" fill="none" stroke="#5a8a5a" stroke-dasharray="3 1.500"/></svg></b>
      <b><svg viewBox="0 0 24 24"><path d="M17.500 3v15.500H3" fill="none" stroke="#444" stroke-dasharray="3 1.500"/><path d="M17.500 16l2.500 2.500-2.500 2.500-2.500-2.500z" fill="#9c9" stroke="#464"/></svg></b>
      <b><svg viewBox="0 0 24 24"><path d="M17.500 3v15.500H3" fill="none" stroke="#333" stroke-dasharray="2 1"/><path d="M17.500 5.500l2 3-2 3-2-3z" fill="#9c9" stroke="#464"/></svg></b>
      <b><svg viewBox="0 0 24 24"><path d="M17.500 5v13.500H3" fill="none" stroke="#333" stroke-dasharray="2 1.500"/><path d="M6.500 7l2 2-2 2-2-2z" fill="#dfd" stroke="#464"/></svg></b>
      <i></i>
      <b class="on"><svg viewBox="0 0 24 24"><use href="#snap"/></svg></b>
      <b><svg viewBox="0 0 24 24" fill="none" stroke="#1d8530" stroke-width="1.700"><path d="M3 5q8-1 11 5 1 4-1.500 8-1.500-2-4-1.500M12.500 18q5 0 7-4"/></svg></b>
      <b><svg viewBox="0 0 24 24"><path d="M3.500 20Q9 12 19.500 5M3.500 14q8-2 16-4" fill="none" stroke="#666"/><path d="M11.500 10l2.500 2.500-2.500 2.500L9 12.500z" fill="#9c9" stroke="#185" stroke-width="1.300"/></svg></b>
      <b><svg viewBox="0 0 24 24"><path d="M3 4q11 1 9 14 7 0 7.500-7" fill="none" stroke="#777" stroke-width="1.300"/><path d="M12 14l2.500 2.500L12 19l-2.500-2.500z" fill="#9c9" stroke="#185" stroke-width="1.300"/></svg></b>
      <b><svg viewBox="0 0 24 24"><path d="M3 6h8q5 5 2 13 5 0 7-6M11 17l3 2" fill="none" stroke="#777" stroke-width="1.300"/><path d="M9.500 4.500h4v4h-4z" fill="#9c9" stroke="#185" stroke-width="1.300"/></svg></b>
      <b><svg viewBox="0 0 24 24"><path d="M3 18l6-4M4 21l6-4M5 14l0 8M8 12l0 7M13 10l6-4M14 6l5-3M14 5v7M17 3v7" stroke="#c22" stroke-width="1.300"/><path d="M11.500 10l2 2-2 2-2-2z" fill="#9c9" stroke="#185" stroke-width="1.300"/></svg></b>
      <i></i>
      <b class="on"><svg viewBox="0 0 24 24"><use href="#snap"/></svg></b>
      <b><svg viewBox="0 0 24 24" fill="none"><path d="M17 5v13.500H3" stroke="#888" stroke-width="1.300"/><circle cx="8.500" cy="10.500" r="2" stroke="#1d8530" stroke-width="1.500"/></svg></b>
      <b><svg viewBox="0 0 24 24" fill="none"><path d="M17 5v13.500H3" stroke="#222" stroke-dasharray="2 1.500" stroke-width="1.300"/><path d="M8.500 7v7M5 10.500h7" stroke="#444" stroke-width="1.300"/></svg></b>
      <b><svg viewBox="0 0 24 24"><path d="M5.500 18.500L10 3.500h6.500L20.500 18.500h-5.500l-.8-3h-3l-1 3zM11.800 12h2.200l-1-4z" fill="#1a1a1a"/><path d="M7 19h13" stroke="#4a4"/><circle cx="5.500" cy="18.500" r="2" fill="#9cf" stroke="#185" stroke-width="1.300"/></svg></b>
      <i></i>
      <b><svg viewBox="0 0 24 24"><path d="M5.500 4.500H17v15H5.500z" fill="url(#greyG)" stroke="#222" stroke-width="1.300"/></svg></b>
      <b class="on"><svg viewBox="0 0 24 24" stroke="#11e" stroke-width="1.500"><path d="M3 7.500h17M3 11.500h17M3 15.500h17M3 19.500h17M5.500 4v17M9.500 4v17M13.500 4v17M17.500 4v17"/></svg></b>
      <b class="on"><svg viewBox="0 0 24 24" stroke="#11e" stroke-width="1.300" fill="none"><path d="M3 5v16M16.500 5v16M14 5.500L7.500 20.500"/></svg></b>
    </aside>
  </main>

  <div class="palette">
    <svg class="none" viewBox="0 0 16 15"><rect width="16" height="15" fill="#fff"/><path d="M.500 0l15 15M15.500 0l-15 15" stroke="#8b1a1a" stroke-width="1.400"/></svg>
    <div class="swatches">
      <i style="background:#000"></i><i style="background:#1a1a1a"></i><i style="background:#333"></i><i style="background:#4d4d4d"></i><i style="background:#666"></i><i style="background:#808080"></i><i style="background:#999"></i><i style="background:#b3b3b3"></i><i style="background:#ccc"></i><i style="background:#e6e6e6"></i><i style="background:#ececec"></i><i style="background:#f2f2f2"></i><i style="background:#f9f9f9"></i><i style="background:#fff"></i>
      <i style="background:#800000"></i><i style="background:#f00"></i><i style="background:#808000"></i><i style="background:#ff0"></i><i style="background:#008000"></i><i style="background:#0f0"></i><i style="background:#008080"></i><i style="background:#0ff"></i><i style="background:#000080"></i><i style="background:#00f"></i><i style="background:#800080"></i><i style="background:#f0f"></i>
      <i style="background:#2b0000"></i><i style="background:#500"></i><i style="background:#800000"></i><i style="background:#a00"></i><i style="background:#d40000"></i><i style="background:#f00"></i><i style="background:#ff2a2a"></i><i style="background:#f55"></i><i style="background:#ff8080"></i><i style="background:#faa"></i><i style="background:#ffd5d5"></i>
      <i style="background:#280b0b"></i><i style="background:#501616"></i><i style="background:#782121"></i><i style="background:#a02c2c"></i><i style="background:#c83737"></i><i style="background:#d35f5f"></i><i style="background:#de8787"></i><i style="background:#e9afaf"></i><i style="background:#f4d7d7"></i>
      <i style="background:#241c1c"></i><i style="background:#483737"></i><i style="background:#6c5353"></i><i style="background:#916f6f"></i><i style="background:#ac9393"></i><i style="background:#c8b7b7"></i><i style="background:#e3dbdb"></i>
      <i style="background:#2b1100"></i><i style="background:#520"></i><i style="background:#803300"></i><i style="background:#a40"></i><i style="background:#d45500"></i><i style="background:#f60"></i><i style="background:#ff7f2a"></i><i style="background:#f95"></i><i style="background:#efb683"></i><i style="background:#f3ccaa"></i><i style="background:#fae6d5"></i>
      <i style="background:#28170b"></i><i style="background:#502d16"></i><i style="background:#784421"></i><i style="background:#a05a2c"></i><i style="background:#c87137"></i><i style="background:#d38d5f"></i><i style="background:#deaa87"></i><i style="background:#e9c6af"></i><i style="background:#f4e3d7"></i>
      <i style="background:#241f1c"></i><i style="background:#483e37"></i><i style="background:#6c5d53"></i><i style="background:#917c6f"></i><i style="background:#ac9d93"></i><i style="background:#c8beb7"></i><i style="background:#e3dedb"></i>
      <i style="background:#2b2200"></i><i style="background:#540"></i><i style="background:#806600"></i><i style="background:#a80"></i><i style="background:#d4aa00"></i><i style="background:#fc0"></i><i style="background:#ffd42a"></i><i style="background:#fd5"></i><i style="background:#f5e080"></i><i style="background:#faeaaa"></i><i style="background:#fbf6d5"></i>
    </div>
    <svg class="more" viewBox="0 0 17 15"><path d="M0 0h4v15H0z" fill="#28220b"/><path d="M12 0v7L8 3z" fill="#000"/></svg>
  </div>
  <div class="palbar">
    <svg class="sb off" viewBox="0 0 16 16"><path d="M10 4l-4 4 4 4"/></svg>
    <div class="pthumb"></div>
    <svg class="sb right" viewBox="0 0 16 16"><path d="M6 4l4 4-4 4"/></svg>
  </div>

  <footer class="status">
    <div class="two lab"><span>Fill:</span><span>Stroke:</span></div>
    <div class="two na"><span>N/A</span><span>N/A</span></div>
    <label class="lo">O:</label><span class="num onum">0</span><span class="spin"><em></em><em class="dn"></em></span>
    <i class="vsep"></i>
    <svg class="eye" viewBox="0 0 30 14"><path d="M1 7.500q5-6 10 0-5 5-10 0z" fill="#999" stroke="#333"/><circle cx="6" cy="7" r="2.200" fill="#111"/><path d="M2 3l1 1.500M5 2l.5 2M9 2L8 4M11 4l-1 1" stroke="#333"/><path d="M20 5q1-4 4-2.500V7" fill="none" stroke="#555"/><path d="M19 7h6v5h-6z" fill="#f0e2c0" stroke="#555"/><path d="M21 9.500h2" stroke="#555"/></svg>
    <span class="combo layer"><span>•0</span><s><svg viewBox="0 0 12 12"><path d="M2 4l4 4 4-4"/></svg></s></span>
    <span class="hint">Drag to select objects to edit</span>
    <i class="vsep end"></i>
    <div class="two xy"><span>X:</span><span>Y:</span></div>
    <div class="two mono"><span>834.68</span><span>651.31</span></div>
    <label class="lz">Z:</label><span class="num zoom">131%</span><span class="spin dark"><em></em><em class="dn"></em></span>
    <svg class="grip" viewBox="0 0 12 12" fill="#aaa"><path d="M8 1h2v2H8zM5 5h2v2H5zM8 5h2v2H8zM2 9h2v2H2zM5 9h2v2H5zM8 9h2v2H8z"/></svg>
  </footer>
</div>

<aside class="taskbar">
  <div class="tasks">
    <b><svg viewBox="0 0 28 28"><path d="M5.500 7l6.500-1v7.500H5.500zM13 5.800L24 4.500v9H13zM5.500 14.500H12V22l-6.500-1zM13 14.500h11v9l-11-1.200z" fill="#fff"/></svg></b>
    <b><svg viewBox="0 0 28 28"><path d="M3 13Q5 3 14 3q11 0 11 12v2H11q0 5 6 5 4 0 7-2v4q-3 2-8 2-9 0-9-8 0-5 5-8-4 0-9 5zM11 13h7q0-5-3.500-5T11 13z" fill="#0b7bd8"/></svg></b>
    <b class="win wide"><svg viewBox="0 0 28 28"><path d="M2.500 4h9l2 2h12v16.500h-23z" fill="#f7d667"/><path d="M2.500 8h23v3h-23z" fill="#fff0a8"/><path d="M6 13h16v9.500h-5v-4.500h-6v4.500H6z" fill="#2ba5e5"/></svg></b>
    <b><svg viewBox="0 0 28 28"><path d="M8 8q1-7 6-6 4 1 4 6M12 8q2-6 7-4l1 4" fill="none" stroke="#fff" stroke-width="1.400"/><path d="M3 8l22.500-1v18l-6 2L3 25z" fill="#fff"/><path d="M7 12.500l4.500-.500v4.500H7zM12.500 12l5-.500v5h-5zM7 17.500h4.500v4.500L7 21.500zM12.500 17.500h5V22.500l-5-.500z" fill="#111"/></svg></b>
    <b class="win"><svg viewBox="0 0 28 28"><path d="M2 3l14 0 5 4 1 18-20 1z" fill="#e9eee4"/><path d="M3 16q6-4 17 0l1 9-18 1z" fill="#b5d62c"/><path d="M5 12q6-7 12 0l-2 5H7z" fill="#64ad43"/><path d="M5 12.500h10M7 15h9" stroke="#333"/><path d="M4 21h4M10 22h4M16 21h3" stroke="#3c8f2c" stroke-width="2"/><path d="M26 2l-5 14" stroke="#e89c28" stroke-width="2.500" fill="none"/></svg></b>
    <b class="win"><svg viewBox="0 0 28 28"><circle cx="14" cy="14" r="13" fill="#c9212e"/><path d="M6 9.500h6M5 13h6M5 17h6M13 9l3 9 5-10" fill="none" stroke="#fff" stroke-width="2.600"/><circle cx="21" cy="20" r="3" fill="#6ab56c"/><path d="M19.500 20l1 1 2-2" stroke="#fff" fill="none"/></svg></b>
    <b class="win"><svg viewBox="0 0 28 28"><path d="M14 4.500q8.500 0 8.500 8.500T15 24v-3q-9 0-9.500-8Q6 4.500 14 4.500z" fill="#119d58"/><path d="M9.500 9.500h4v4l-1.500 3h-1.500l1-3h-2zM15 9.500h4v4l-1.500 3H16l1-3h-2z" fill="#fff"/></svg></b>
    <b class="win"><svg viewBox="0 0 28 28"><circle cx="14" cy="14" r="12.200" fill="#fbc934"/><path d="M14 14L3.400 8a12.200 12.200 0 0 1 21.200 0z" fill="#df4a39"/><path d="M14 14L3.400 8A12.200 12.200 0 0 0 13 26.200l4-7z" fill="#23a05b"/><path d="M14 8h10.600L14 2z" fill="#df4a39"/><circle cx="14" cy="14" r="5.600" fill="#fff"/><circle cx="14" cy="14" r="4.400" fill="#427fe0"/></svg></b>
    <b class="win"><svg viewBox="0 0 28 28"><path d="M6 4l-3 2 1 12-2 1 9 3 3-4z" fill="#a5a9ab"/><path d="M6 4l20-1-1 15-17-1z" fill="#dce6ec" stroke="#bbb"/><path d="M8 13l2-3 2 3 2-7 2 6 3-5 2 6 3-3" fill="none" stroke="#4695cb"/><path d="M10 20l8-3 5 5-6 3-6-1z" fill="#d3d7d9"/></svg></b>
    <b class="win cur"><svg viewBox="0 0 28 28"><path d="M14 3l11 11q1 2-3 3l-6 1 4 2-4 2 1 3-4 1-1-4-5-2 3-2-6-1q-3-1-1-4z" fill="#11141c"/><path d="M14 3l5 5-3 2-3-1-3 2-2-1z" fill="#fff"/><path d="M8 10l2 1 3-2 3 1 3-2 5 6-5 1-3-3-3 2-3-2-2 2-4-1z" fill="#596070"/></svg></b>
  </div>
  <div class="tray">
    <svg class="chev" viewBox="0 0 28 28"><path d="M17 7.500l-6.500 6.500 6.500 6.500"/></svg>
    <svg class="pen" viewBox="0 0 28 28"><path d="M11 15l7-9q2-2 4 0t-1 4l-6 7q-2 2-5 1zM8 17q-4 1-3 4 3 4 7-1l1-2M15 17q5-2 4 1-3 3-1 5 3 0 4-3"/></svg>
    <svg class="kbd" viewBox="0 0 28 28"><path d="M2 7.500h24v13H2z"/><path d="M5 11h18M5 14h18" stroke-dasharray="2 1.500"/><path d="M5 17.500h2M9 17.500h10M21 17.500h2"/></svg>
    <span class="eng">ENG</span>
    <span class="time">3:07 PM</span>
    <span class="date">8/8/2016</span>
    <i class="edge"></i>
  </div>
</aside>
</div>
</body>
</html>
```
FILE: styles.css
```css
* { box-sizing: border-box; }
body { margin: 0; font: 12px/16px "Open Sans", "Noto Sans", sans-serif; color: #111; width: 1500px; height: 1000px; overflow: hidden; background: #fff; }
b, i, s, em { font-style: normal; text-decoration: none; display: block; flex: none; }
svg { display: block; flex: none; }
span, label { white-space: nowrap; }
u { text-underline-offset: 2px; }
.defs { width: 0; height: 0; }
.desktop { display: flex; width: 1500px; height: 1000px; }
.app { width: 1431px; height: 1000px; display: flex; flex-direction: column; background: #fff; flex: none; }

.titlebar { height: 27px; display: flex; align-items: center; }
.logo { width: 19px; height: 19px; }
.title { margin-left: 3px; font-size: 12.500px; letter-spacing: 0.110px; }
.winctl { width: 120px; height: 24px; margin-left: auto; margin-right: 17px; margin-top: -2px; }
.menubar { height: 21px; padding: 3px 0 0 9px; display: flex; border-bottom: 1px solid #ddd; }
.menubar span { flex: none; letter-spacing: 0.050px; }
.m1 { width: 35px; } .m2 { width: 37px; } .m3 { width: 43px; } .m4 { width: 46px; } .m5 { width: 53px; }
.m6 { width: 42px; } .m7 { width: 40px; } .m8 { width: 49px; } .m9 { width: 76px; }

.toolbar { display: flex; align-items: center; padding: 1px 0 0 2px; }
.commands { height: 33px; border-bottom: 1px solid #ddd; }
.nodes { height: 35px; border-bottom: 1px solid #e4e4e4; padding-top: 2px; }
.toolbar > b { width: 28.670px; height: 28px; display: flex; align-items: center; justify-content: center; }
.toolbar > i { width: 12.700px; height: 18px; background: linear-gradient(#aaa, #aaa) 6px 0 / 1px 18px no-repeat; }
.toolbar svg { width: 24px; height: 24px; }
.toolbar > b.drop { width: 27px; padding-right: 1px; }
b.on { background: #cde8ff; border: 1px solid #99d1ff; }
.nd .k { stroke: #666; fill: none; }
.nd .n { stroke: #11f; fill: #dde; stroke-width: 1.400; }
.nd .f { stroke: #77f; fill: #dde; stroke-width: 1.300; }
.nd .a { stroke: #111; stroke-width: 1.500; }

.lx, .ly { color: #777; }
.lx { width: 25px; padding-left: 9px; }
.ly { width: 24px; padding-left: 9px; }
.num { width: 49px; height: 22px; border: 1px solid #abadb3; border-right: 0; background: #f0f0f0; color: #777; line-height: 20px; padding-left: 3px; flex: none; }
.spin { width: 11px; height: 22px; display: flex; flex-direction: column; gap: 1px; flex: none; }
.spin em { height: 10.500px; background: #f2f2f2; border: 1px solid #ddd; display: flex; align-items: center; justify-content: center; }
.spin em::before { content: ""; border: 3px solid transparent; border-top: 0; border-bottom: 4px solid #666; }
.spin em.dn::before { border-bottom: 0; border-top: 4px solid #666; }
.combo { width: 47px; height: 22px; border: 1.500px solid #999; display: flex; background: #fff; line-height: 20px; margin-left: 2px; flex: none; }
.combo > span { flex: 1; padding-left: 2px; }
.combo s { width: 18px; border-left: 1px solid #aaa; background: #e4e4e4; display: flex; align-items: center; justify-content: center; }
.combo s svg { width: 12px; height: 12px; fill: none; stroke: #555; stroke-width: 1.200; }

.work { height: 818px; display: flex; background: #efefef; }
.toolbox { width: 39px; padding: 2.500px 0 0 2px; border-right: 2px solid #ececec; background: #fff; flex: none; }
.toolbox b { width: 33px; height: 32.900px; display: flex; align-items: center; justify-content: center; }
.toolbox svg { width: 28px; height: 28px; }
.view { width: 1034px; flex: none; display: flex; flex-direction: column; }
.viewtop { display: flex; height: 798px; }
.canvas { width: 1010px; height: 798px; background: #fff; }
.vbar { width: 17px; display: flex; flex-direction: column; }
.sb { width: 16px; height: 16px; fill: none; stroke: #555; stroke-width: 2; }
.vbar .sb:first-child { stroke-width: 1; margin-top: 1px; }
.vbar .up { margin-top: 2px; }
.vthumb { width: 16px; height: 176px; background: #cbcccb; margin-top: 251px; }
.dnarr { margin-top: auto; margin-bottom: 1px; }
.hbar { height: 18px; display: flex; align-items: center; padding-top: 1px; }
.hthumb { width: 209px; height: 16px; background: #cbcccb; margin-left: 391px; }
.hbar .right { margin-left: 376px; }
.hbar .cms { margin-left: 2px; }

.dock { width: 322px; height: 815px; margin-top: 2px; border-left: 2px solid #333; border-top: 2px solid #222; border-right: 1px solid #fff; flex: none; background: #efefef; }
.dockhead { height: 23px; display: flex; align-items: center; border-bottom: 1px solid #aaa; margin-right: 2px; padding-bottom: 1px; }
.dicon { width: 14px; height: 14px; }
.dtitle { margin-left: 0; letter-spacing: 0.370px; }
.dbtn { width: 40px; height: 14px; margin-left: auto; margin-right: 1px; }
.dockbody { width: 317px; height: 783px; border-right: 1px solid #f8f8f8; border-bottom: 1px solid #fafafa; }
.tabs { display: flex; align-items: flex-end; height: 33px; padding-left: 6px; }
.tab { height: 24px; border: 1px solid #d9d9d9; border-bottom: 0; border-left: 0; display: flex; align-items: center; letter-spacing: 0.170px; }
.tab svg { width: 12px; height: 12px; }
.tab.cur { width: 45px; height: 27px; background: #fff; border-left: 1px solid #d9d9d9; padding: 1px 0 0 3px; }
.cur span { margin-left: 4px; }
.t2 { width: 92px; } .t3 { width: 91px; padding-left: 2px; }
.t2 span { margin-left: 4px; } .t3 span { margin-left: 4px; }
.panel { height: 448px; width: 308px; margin-left: 5px; border: 1px solid #d9d9d9; border-top: 0; background: #fff; padding-top: 10px; }
.paints { width: 307px; height: 28px; }
.panel strong { display: block; margin: 13px 0 0 8px; letter-spacing: 0.150px; }
.slider { display: flex; margin-left: 5px; height: 27px; align-items: center; letter-spacing: 0.350px; }
.blur { margin-top: 4px; color: #777; }
.opac { margin-top: 4px; }
.track { width: 296px; height: 27px; border: 1px solid #b5bac0; border-right: 0; display: flex; justify-content: space-between; line-height: 24px; padding: 0 4px 0 6px; }
.opac .track { padding: 1px 1px 2px 1px; }
.bar { flex: 1; display: flex; justify-content: space-between; background: #b4c2cd; border-right: 2px solid #111; border-bottom: 2px solid #111; line-height: 21px; padding: 0 0 0 5px; }
.slider .spin { height: 23px; width: 12px; }
.slider .spin em { height: 11px; }
.snapbar { width: 36px; background: #fff; padding: 2px 0 0 3px; flex: none; border-left: 2px solid #f4f4f4; height: 816px; }
.snapbar b { width: 29px; height: 28.400px; display: flex; align-items: center; justify-content: center; }
.snapbar svg { width: 24px; height: 24px; }
.snapbar i { height: 13.600px; width: 17px; margin-left: 6px; background: linear-gradient(#aaa, #aaa) 0 6px / 17px 1px no-repeat; }

.palette { height: 18px; display: flex; border-top: 2px solid #111; background: #f4f4f4; width: 1420px; padding-bottom: 1px; }
.none { width: 18px; height: 15px; border-left: 2px solid #111; }
.swatches { width: 1396px; display: flex; flex: none; }
.swatches i { flex: 1; height: 15px; }
.more { width: 17px; height: 15px; }
.palbar { height: 19px; display: flex; align-items: center; background: #efefef; border-top: 2px solid #fff; padding-top: 1px; }
.palbar .off { stroke: #bbb; margin-left: 1px; }
.pthumb { width: 294px; height: 15px; background: #cbcccb; margin-left: 2px; }
.palbar .right { margin-left: auto; margin-right: 11px; }
.status { height: 29px; display: flex; align-items: center; background: #efefef; }
.two { display: flex; flex-direction: column; height: 29px; flex: none; }
.two span { line-height: 14px; height: 14px; padding-top: 1px; }
.lab { width: 76px; padding-left: 2px; letter-spacing: 0.100px; }
.na { width: 60px; padding-left: 3px; }
.lo { width: 17px; padding-left: 2px; }
.onum { width: 40px; padding-left: 4px; }
.vsep { width: 1px; height: 28px; background: #aaa; margin-left: 4px; }
.eye { width: 30px; height: 14px; margin-left: 5px; }
.layer { width: 65px; height: 28px; margin-left: 1px; line-height: 26px; font-weight: bold; }
.hint { margin-left: 6px; letter-spacing: 0.180px; }
.vsep.end { margin-left: auto; }
.xy { width: 22px; padding-left: 3px; }
.mono { font: 12.700px "DejaVu Sans Mono", monospace; width: 52px; }
.lz { width: 17px; padding-left: 4px; }
.zoom { background: #fff; color: #222; padding-left: 6px; }
.spin.dark em { border-color: #999; }
.spin.dark em::before { border-bottom-color: #111; }
.spin.dark em.dn::before { border-top-color: #111; }
.grip { width: 12px; height: 12px; margin: 10px 3px 0 8px; }

.taskbar { width: 69px; height: 1000px; background: #090909; color: #fff; display: flex; flex-direction: column; justify-content: space-between; flex: none; }
.tasks { margin-top: -3.500px; }
.tasks b { height: 51.350px; width: 69px; display: flex; align-items: center; justify-content: center; padding: 5px 1px 5px 0; }
.tasks svg { width: 28px; height: 28px; }
.win { background: linear-gradient(#efc08f, #efc08f) right center / 2px 41px no-repeat; }
.win.wide { background: linear-gradient(#c39a76, #c39a76) right center / 4px 41px no-repeat; }
.tasks .win.cur { background: linear-gradient(#efc08f, #efc08f) right center / 2px 51px no-repeat, #3b3b3b; }
.tray { display: flex; flex-direction: column; align-items: center; }
.tray svg { width: 28px; height: 28px; fill: none; stroke: #fff; stroke-width: 1.200; }
.chev { margin-right: 23px; margin-bottom: 12px; }
.pen { margin-bottom: 16px; }
.kbd { margin-bottom: 19px; margin-right: 1px; }
.eng { margin-bottom: 26px; }
.time { margin-bottom: 4px; }
.date { margin-bottom: 12px; }
.edge { width: 69px; height: 1px; background: #444; margin-bottom: 5px; }
```
